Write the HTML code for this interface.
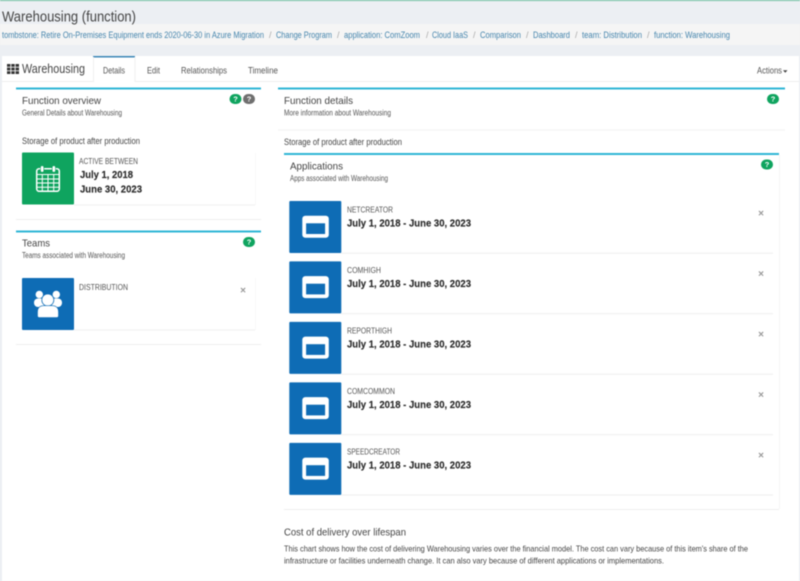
<!DOCTYPE html>
<html><head><meta charset="utf-8"><title>Warehousing (function)</title>
<style>
html,body{margin:0;padding:0;width:800px;height:581px;overflow:hidden;background:#eceff3}
svg{display:block;filter:blur(.4px)}
text{font-family:"Liberation Sans",sans-serif;fill:#444}
.h{font-size:10.5px}
.s{font-size:7.8px;fill:#555}
.b{font-size:9px}
.l{font-size:8px;fill:#555}
.d{font-size:10.5px;font-weight:bold;fill:#2b2b2b;stroke:#2b2b2b;stroke-width:.15px}
.c{font-size:9px;fill:#4585ad}
.sl{font-size:9px;fill:#aaa}
.t{font-size:9px;fill:#555}
.q{font-size:7.5px;font-weight:bold;fill:#fff}
.x{font-size:10px;font-weight:bold;fill:#999}
</style></head><body>
<svg width="800" height="581" viewBox="0 0 800 581" xmlns="http://www.w3.org/2000/svg">
<defs>
<g id="app"><rect width="52" height="52" rx="1" fill="#0e6cb5"/><rect x="13" y="14.700" width="26.500" height="22" rx="3" fill="#fff"/><rect x="16.800" y="22.300" width="19" height="10.700" fill="#0e6cb5"/></g>
<g id="g"><rect x="-6" y="-5" width="12" height="10" rx="5" fill="#0fa45f"/><text class="q" x="0" y="2.700" text-anchor="middle">?</text></g>
</defs>
<rect width="800" height="581" fill="#eceff3"/>
<rect width="800" height="1" fill="#6dbf9f"/>
<rect y="24" width="800" height="21" fill="#f5f5f5"/>
<text x="2" y="21.500" font-size="14.500" textLength="134" lengthAdjust="spacingAndGlyphs">Warehousing (function)</text>
<text class="c" x="2" y="38" textLength="262" lengthAdjust="spacingAndGlyphs">tombstone: Retire On-Premises Equipment ends 2020-06-30 in Azure Migration</text>
<text class="sl" x="269" y="38">/</text>
<text class="c" x="276" y="38" textLength="56" lengthAdjust="spacingAndGlyphs">Change Program</text>
<text class="sl" x="337" y="38">/</text>
<text class="c" x="344" y="38" textLength="76" lengthAdjust="spacingAndGlyphs">application: ComZoom</text>
<text class="sl" x="426" y="38">/</text>
<text class="c" x="432" y="38" textLength="36" lengthAdjust="spacingAndGlyphs">Cloud IaaS</text>
<text class="sl" x="473" y="38">/</text>
<text class="c" x="480" y="38" textLength="41" lengthAdjust="spacingAndGlyphs">Comparison</text>
<text class="sl" x="526" y="38">/</text>
<text class="c" x="533" y="38" textLength="37" lengthAdjust="spacingAndGlyphs">Dashboard</text>
<text class="sl" x="575" y="38">/</text>
<text class="c" x="582" y="38" textLength="60" lengthAdjust="spacingAndGlyphs">team: Distribution</text>
<text class="sl" x="647" y="38">/</text>
<text class="c" x="654" y="38" textLength="76" lengthAdjust="spacingAndGlyphs">function: Warehousing</text>

<rect x="2" y="56" width="797" height="525" fill="#fff"/>
<rect x="2" y="81" width="797" height="1" fill="#eee"/>
<rect x="93" y="56" width="42" height="26" fill="#fff"/>
<rect x="93" y="56" width="42" height="1.500" fill="#3a86b7"/>
<rect x="93" y="57" width="1" height="25" fill="#f0f0f0"/><rect x="134.500" y="57" width="1" height="25" fill="#f0f0f0"/>
<g fill="#333">
<rect x="7" y="64" width="3.400" height="2.800"/><rect x="11.300" y="64" width="3.400" height="2.800"/><rect x="15.600" y="64" width="3.400" height="2.800"/>
<rect x="7" y="67.600" width="3.400" height="2.800"/><rect x="11.300" y="67.600" width="3.400" height="2.800"/><rect x="15.600" y="67.600" width="3.400" height="2.800"/>
<rect x="7" y="71.200" width="3.400" height="2.800"/><rect x="11.300" y="71.200" width="3.400" height="2.800"/><rect x="15.600" y="71.200" width="3.400" height="2.800"/>
</g>
<text x="22" y="72.800" font-size="12.500" textLength="63" lengthAdjust="spacingAndGlyphs">Warehousing</text>
<text class="t" x="103" y="73.500" textLength="22" lengthAdjust="spacingAndGlyphs">Details</text>
<text class="t" x="147" y="73.500" textLength="13" lengthAdjust="spacingAndGlyphs">Edit</text>
<text class="t" x="181" y="73.500" textLength="46" lengthAdjust="spacingAndGlyphs">Relationships</text>
<text class="t" x="248" y="73.500" textLength="30" lengthAdjust="spacingAndGlyphs">Timeline</text>
<text class="t" x="757" y="73.500" textLength="25" lengthAdjust="spacingAndGlyphs">Actions</text>
<path d="M783 70.300h4.500l-2.250 2.400z" fill="#444"/>

<!-- Left: overview -->
<rect x="16" y="87.500" width="245" height="2" fill="#2fb6d6"/>
<text class="h" x="22" y="104" textLength="79" lengthAdjust="spacingAndGlyphs">Function overview</text>
<text class="s" x="22" y="115.500" textLength="100" lengthAdjust="spacingAndGlyphs">General Details about Warehousing</text>
<use href="#g" x="235.500" y="99"/>
<rect x="243" y="94" width="12" height="10" rx="5" fill="#6f6f6f"/><text class="q" x="249" y="101.700" text-anchor="middle">?</text>
<text class="b" x="22" y="144" textLength="118" lengthAdjust="spacingAndGlyphs">Storage of product after production</text>
<rect x="74" y="204.500" width="181" height="1" fill="#f0f0f0"/>
<rect x="255" y="153" width="1" height="52" fill="#f8f8f8"/>
<rect x="22" y="152.500" width="52" height="52" rx="1" fill="#0fa45f"/>
<g fill="none" stroke="#fff">
<rect x="36.700" y="168.700" width="22.600" height="22.600" rx="2.500" stroke-width="1.500"/>
<path d="M37 174.500H59M37 179H59M37 183H59M37 187.200H59M42.300 174.500V191M48 174.500V191M53.700 174.500V191" stroke-width="1"/>
</g>
<rect x="40.500" y="165.700" width="3.300" height="6.500" rx="1.600" fill="#fff" stroke="#0fa45f" stroke-width=".6"/>
<rect x="52.200" y="165.700" width="3.300" height="6.500" rx="1.600" fill="#fff" stroke="#0fa45f" stroke-width=".6"/>
<text class="l" x="79" y="164" textLength="59" lengthAdjust="spacingAndGlyphs">ACTIVE BETWEEN</text>
<text class="d" x="80" y="178" textLength="53" lengthAdjust="spacingAndGlyphs">July 1, 2018</text>
<text class="d" x="80" y="192.700" textLength="62" lengthAdjust="spacingAndGlyphs">June 30, 2023</text>
<rect x="16" y="219" width="245" height="1" fill="#eee"/>

<!-- Left: teams -->
<rect x="16" y="230.500" width="245" height="2" fill="#2fb6d6"/>
<text class="h" x="22" y="246.500" textLength="28" lengthAdjust="spacingAndGlyphs">Teams</text>
<text class="s" x="22" y="258" textLength="103" lengthAdjust="spacingAndGlyphs">Teams associated with Warehousing</text>
<use href="#g" x="249" y="242"/>
<rect x="74" y="329.500" width="181" height="1" fill="#f0f0f0"/>
<rect x="255" y="278" width="1" height="52" fill="#f8f8f8"/>
<rect x="22" y="278" width="52" height="52" rx="1" fill="#0e6cb5"/>
<g fill="#fff">
<circle cx="39.300" cy="294.500" r="3.700"/><circle cx="56.300" cy="294.500" r="3.700"/>
<rect x="34" y="298.500" width="11" height="8.500" rx="4"/><rect x="51" y="298.500" width="11" height="8.500" rx="4"/>
<circle cx="47.800" cy="300" r="6" stroke="#0e6cb5" stroke-width=".8"/>
<path d="M37.500 316v-4q0-6 6-6.300h9q6 .3 6 6.300v4q0 1.500-1.500 1.500h-18q-1.500 0-1.500-1.500z" stroke="#0e6cb5" stroke-width=".6"/>
</g>
<text class="l" x="79" y="290" textLength="49" lengthAdjust="spacingAndGlyphs">DISTRIBUTION</text>
<text class="x" x="243" y="293.500" text-anchor="middle">×</text>
<rect x="16" y="344" width="245" height="1" fill="#eee"/>

<!-- Right -->
<rect x="278" y="87.500" width="507" height="2" fill="#2fb6d6"/>
<text class="h" x="284" y="104" textLength="69" lengthAdjust="spacingAndGlyphs">Function details</text>
<text class="s" x="284" y="115.500" textLength="107" lengthAdjust="spacingAndGlyphs">More information about Warehousing</text>
<use href="#g" x="773" y="99"/>
<rect x="278" y="129.500" width="507" height="1" fill="#f2f2f2"/>
<text class="b" x="284" y="145" textLength="118" lengthAdjust="spacingAndGlyphs">Storage of product after production</text>
<rect x="284" y="153" width="495" height="2" fill="#2fb6d6"/>
<text class="h" x="290" y="169.300" textLength="53" lengthAdjust="spacingAndGlyphs">Applications</text>
<text class="s" x="290" y="181" textLength="98" lengthAdjust="spacingAndGlyphs">Apps associated with Warehousing</text>
<use href="#g" x="767" y="164.500"/>
<rect x="779" y="155" width="1" height="354" fill="#f5f5f5"/>

<use href="#app" x="289.300" y="201"/>
<rect x="341" y="252.700" width="432" height="1" fill="#eee"/>
<text class="l" x="347" y="212.700" textLength="46" lengthAdjust="spacingAndGlyphs">NETCREATOR</text>
<text class="d" x="347" y="226.500" textLength="124" lengthAdjust="spacingAndGlyphs">July 1, 2018 - June 30, 2023</text>
<text class="x" x="761" y="216.500" text-anchor="middle">×</text>

<use href="#app" x="289.300" y="261.400"/>
<rect x="341" y="313.200" width="432" height="1" fill="#eee"/>
<text class="l" x="347" y="273.200" textLength="34" lengthAdjust="spacingAndGlyphs">COMHIGH</text>
<text class="d" x="347" y="287" textLength="124" lengthAdjust="spacingAndGlyphs">July 1, 2018 - June 30, 2023</text>
<text class="x" x="761" y="277" text-anchor="middle">×</text>

<use href="#app" x="289.300" y="321.900"/>
<rect x="341" y="373.700" width="432" height="1" fill="#eee"/>
<text class="l" x="347" y="333.700" textLength="45" lengthAdjust="spacingAndGlyphs">REPORTHIGH</text>
<text class="d" x="347" y="347.500" textLength="124" lengthAdjust="spacingAndGlyphs">July 1, 2018 - June 30, 2023</text>
<text class="x" x="761" y="337.500" text-anchor="middle">×</text>

<use href="#app" x="289.300" y="382.400"/>
<rect x="341" y="434.200" width="432" height="1" fill="#eee"/>
<text class="l" x="347" y="394.200" textLength="48" lengthAdjust="spacingAndGlyphs">COMCOMMON</text>
<text class="d" x="347" y="408" textLength="124" lengthAdjust="spacingAndGlyphs">July 1, 2018 - June 30, 2023</text>
<text class="x" x="761" y="398" text-anchor="middle">×</text>

<use href="#app" x="289.300" y="442.900"/>
<rect x="341" y="494.500" width="432" height="1" fill="#eee"/>
<text class="l" x="347" y="454.500" textLength="53" lengthAdjust="spacingAndGlyphs">SPEEDCREATOR</text>
<text class="d" x="347" y="468.500" textLength="124" lengthAdjust="spacingAndGlyphs">July 1, 2018 - June 30, 2023</text>
<text class="x" x="761" y="458.500" text-anchor="middle">×</text>

<rect x="284" y="509" width="495" height="1" fill="#eee"/>
<text x="284" y="535.500" font-size="10.500" textLength="122" lengthAdjust="spacingAndGlyphs">Cost of delivery over lifespan</text>
<text x="284" y="551.500" font-size="8.500" textLength="464" lengthAdjust="spacingAndGlyphs">This chart shows how the cost of delivering Warehousing varies over the financial model. The cost can vary because of this item's share of the</text>
<text x="284" y="563.500" font-size="8.500" textLength="380" lengthAdjust="spacingAndGlyphs">infrastructure or facilities underneath change. It can also vary because of different applications or implementations.</text>
</svg>
</body></html>
